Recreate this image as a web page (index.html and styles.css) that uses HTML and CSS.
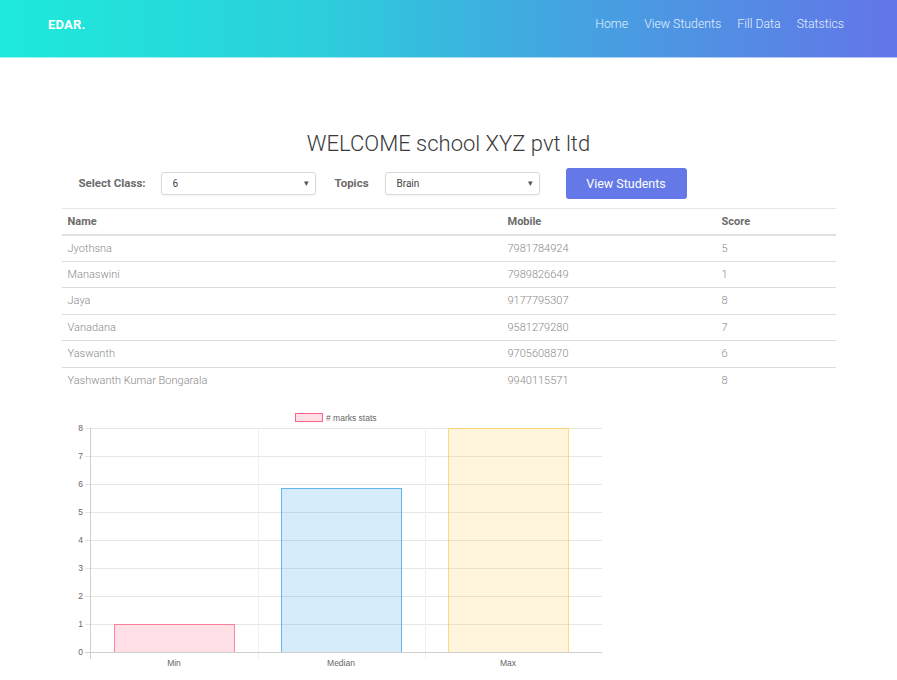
FILE: index.html
```html
<!DOCTYPE html>
<html>
<head>
<meta charset="utf-8">
<link rel="stylesheet" href="styles.css">
</head>
<body>
<header class="topbar">
  <div class="brand">EDAR.</div>
  <nav class="nav">
    <a>Home</a>
    <a>View Students</a>
    <a>Fill Data</a>
    <a>Statstics</a>
  </nav>
</header>
<main class="container">
  <h1 class="title">WELCOME school XYZ pvt ltd</h1>
  <div class="form-row">
    <label class="lbl lbl-class">Select Class:</label>
    <div class="select sel-class"><span>6</span><span class="caret">▾</span></div>
    <label class="lbl lbl-topic">Topics</label>
    <div class="select sel-topic"><span>Brain</span><span class="caret">▾</span></div>
    <button class="btn">View Students</button>
  </div>
  <table class="tbl">
    <thead>
      <tr><th class="c1">Name</th><th class="c2">Mobile</th><th class="c3">Score</th></tr>
    </thead>
    <tbody>
      <tr><td>Jyothsna</td><td>7981784924</td><td>5</td></tr>
      <tr><td>Manaswini</td><td>7989826649</td><td>1</td></tr>
      <tr><td>Jaya</td><td>9177795307</td><td>8</td></tr>
      <tr><td>Vanadana</td><td>9581279280</td><td>7</td></tr>
      <tr><td>Yaswanth</td><td>9705608870</td><td>6</td></tr>
      <tr><td>Yashwanth Kumar Bongarala</td><td>9940115571</td><td>8</td></tr>
    </tbody>
  </table>
  <div class="chart">
    <svg width="540" height="275" viewBox="0 0 540 275" xmlns="http://www.w3.org/2000/svg">
      <rect x="233.5" y="8.5" width="27" height="8" fill="rgba(255,99,132,0.2)" stroke="rgb(255,99,132)" stroke-width="1"/>
      <text x="264" y="15.5" class="ctext"># marks stats</text>
      <g stroke="#e6e6e6" stroke-width="1">
        <line x1="23" y1="23.5" x2="540" y2="23.5"/>
        <line x1="23" y1="51.5" x2="540" y2="51.5"/>
        <line x1="23" y1="79.5" x2="540" y2="79.5"/>
        <line x1="23" y1="107.5" x2="540" y2="107.5"/>
        <line x1="23" y1="135.5" x2="540" y2="135.5"/>
        <line x1="23" y1="163.5" x2="540" y2="163.5"/>
        <line x1="23" y1="191.5" x2="540" y2="191.5"/>
        <line x1="23" y1="219.5" x2="540" y2="219.5"/>
      </g>
      <g stroke="#f0f0f0" stroke-width="1">
        <line x1="196.5" y1="23" x2="196.5" y2="254"/>
        <line x1="363.5" y1="23" x2="363.5" y2="254"/>
      </g>
      <rect x="52.5" y="219.5" width="120" height="28" fill="rgba(255,99,132,0.2)" stroke="rgba(255,99,132,0.75)" stroke-width="1"/>
      <rect x="219.5" y="83.5" width="120" height="164" fill="rgba(54,162,235,0.2)" stroke="rgba(54,162,235,0.75)" stroke-width="1"/>
      <rect x="386.5" y="23.5" width="120" height="224" fill="rgba(255,206,86,0.2)" stroke="rgba(255,206,86,0.75)" stroke-width="1"/>
      <line x1="23" y1="247.5" x2="540" y2="247.5" stroke="#cfcfcf"/>
      <line x1="28.5" y1="23" x2="28.5" y2="254" stroke="#cfcfcf"/>
      <g class="ctext" text-anchor="end">
        <text x="21" y="26">8</text>
        <text x="21" y="54">7</text>
        <text x="21" y="82">6</text>
        <text x="21" y="110">5</text>
        <text x="21" y="138">4</text>
        <text x="21" y="166">3</text>
        <text x="21" y="194">2</text>
        <text x="21" y="222">1</text>
        <text x="21" y="250">0</text>
      </g>
      <g class="ctext" text-anchor="middle">
        <text x="112" y="261">Min</text>
        <text x="279" y="261">Median</text>
        <text x="446" y="261">Max</text>
      </g>
    </svg>
  </div>
</main>
</body>
</html>
```
FILE: styles.css
```css
* { box-sizing: border-box; }
body {
  margin: 0;
  font-family: "Roboto", "Inter", "Liberation Sans", sans-serif;
  background: #fff;
  color: #333;
}
.topbar {
  height: 58px;
  display: flex;
  align-items: center;
  justify-content: space-between;
  padding: 0 53px 9px 48px;
  background: linear-gradient(90deg, #1deada 0%, #2ccfdc 35%, #41a8e0 60%, #6375e8 100%);
  border-bottom: 1px solid rgba(255,255,255,0.55);
}
.brand {
  color: #fff;
  font-weight: 700;
  font-size: 13px;
  letter-spacing: 0.2px;
}
.nav {
  display: flex;
  gap: 16px;
}
.nav a {
  color: #e3f1ff;
  font-size: 12.3px;
  font-weight: 300;
}
.container {
  width: 774px;
  margin: 0 auto;
}
.title {
  margin: 73px 0 0;
  text-align: center;
  font-size: 22px;
  font-weight: 300;
  color: #3a3a3a;
  line-height: 26px;
}
.form-row {
  display: flex;
  align-items: center;
  height: 30px;
  margin-top: 11px;
  padding-left: 17px;
}
.lbl {
  font-size: 11.5px;
  font-weight: 700;
  color: #6b6b6b;
}
.lbl-class { width: 82px; }
.lbl-topic { margin-left: 19px; width: 50px; }
.select {
  height: 23px;
  border: 1px solid #d9d9d9;
  border-radius: 3px;
  display: flex;
  align-items: center;
  justify-content: space-between;
  padding: 0 6px 0 11px;
  font-size: 10px;
  color: #444;
  box-shadow: 0 1px 2px rgba(0,0,0,0.05);
}
.sel-class { width: 155px; }
.sel-topic { width: 155px; }
.caret { font-size: 9px; color: #555; }
.btn {
  margin-left: 26px;
  width: 121px;
  height: 31px;
  border: 0;
  border-radius: 3px;
  background: #6479e7;
  color: #fff;
  font-family: inherit;
  font-size: 12.5px;
  font-weight: 400;
}
.tbl {
  width: 100%;
  border-collapse: collapse;
  margin-top: 10px;
  font-size: 11px;
}
.tbl th {
  text-align: left;
  font-weight: 700;
  color: #6b6b6b;
  height: 26px;
  padding: 0 6px;
  border-top: 1px solid #e6e6e6;
  border-bottom: 2px solid #e0e0e0;
}
.tbl td {
  height: 26.5px;
  padding: 0 6px;
  color: #8a8a8a;
  font-weight: 300;
  border-bottom: 1px solid #dcdcdc;
}
.tbl tbody tr:last-child td { border-bottom: 0; }
.c1 { width: 440px; }
.c2 { width: 214px; }
.chart {
  margin-top: 11px;
}
.chart svg { display: block; }
.ctext {
  font-family: "Liberation Sans", Arial, sans-serif;
  font-size: 8.5px;
  fill: #666;
}
```
